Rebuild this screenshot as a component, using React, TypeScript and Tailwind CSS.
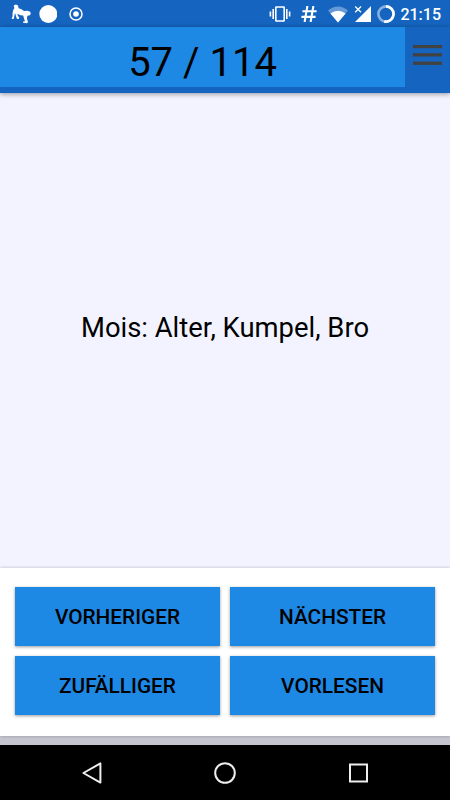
import React from 'react';

const actions = ['Vorheriger', 'Nächster', 'Zufälliger', 'Vorlesen'];

const StatusBar = () => (
  <div className="flex h-[27px] shrink-0 items-center justify-between bg-[#1565c0] text-white">
    <div className="flex h-full items-center pl-[10px]">
      <svg width="24" height="27" viewBox="0 0 24 27" fill="currentColor">
        <path d="M4 5.2 6 4.5 8 5.6 8.6 8.2 11.5 9.2 14 11 17.5 10.8 20.2 11.8 20.8 13.4 20 15.2 17.4 15.8 16.9 18.5 18 22 17 23.3 13 22.8 13.2 21.6 15 21.2 14 18.4 13.2 15.6 10.5 15.2 7.8 14 7.4 14.8 9.2 17.8 8.8 19 6.8 18.8 5.8 15.4 5 13 4.2 16.4 3.9 18.8 2 19 1.7 18 2.5 16.8 2.6 12.8 3.4 9.4 4.6 8 3.8 6.8Z" />
      </svg>
      <svg className="ml-[5px]" width="18" height="18" viewBox="0 0 18 18" fill="currentColor">
        <circle cx="9.3" cy="9" r="9" />
      </svg>
      <svg className="ml-[12px]" width="14" height="14" viewBox="0 0 14 14" fill="none" stroke="currentColor">
        <circle cx="7" cy="7" r="6" strokeWidth="1.5" />
        <circle cx="7" cy="7" r="2.8" fill="currentColor" stroke="none" />
      </svg>
    </div>

    <div className="flex h-full items-center pr-[9px]">
      <svg width="22" height="16" viewBox="0 0 22 16" fill="none" stroke="currentColor" strokeWidth="1.6">
        <rect x="6.8" y="1" width="8.4" height="14" rx="0.6" />
        <path d="M4.2 3v10M1.4 5.5v5M17.8 3v10M20.6 5.5v5" />
      </svg>
      <svg className="ml-[10px]" width="16" height="16" viewBox="0 0 16 16" fill="none" stroke="currentColor" strokeWidth="2.1">
        <path d="M6.4 0 3.6 16M12.4 0 9.6 16M1.4 5.2H15.6M0.4 10.9H14.6" />
      </svg>
      <svg className="ml-[10px]" width="22" height="18" viewBox="0 0 22 18" fill="currentColor">
        <path d="M1 5.5Q11-2.5 21 5.5L11 17.5Z" opacity="0.35" />
        <path d="M3.4 8.4Q11 3 18.6 8.4L11 17.5Z" />
      </svg>
      <svg className="ml-[5px]" width="17" height="17" viewBox="0 0 17 17" fill="currentColor">
        <path d="M17 1V17H1Z" />
        <path d="M0 0H8.5L7.5 9 0 8Z" fill="#1565c0" />
        <path d="M1.2 1.5 7 7.3M7 1.5 1.2 7.3" stroke="currentColor" strokeWidth="1.3" />
      </svg>
      <svg className="ml-[6px]" width="18" height="18" viewBox="0 0 18 18" fill="none" stroke="currentColor" strokeWidth="2.6">
        <circle cx="9" cy="9" r="7.6" opacity="0.5" />
        <path d="M9 1.4A7.6 7.6 0 1 1 7.2 16.4" />
      </svg>
      <span className="ml-[5px] pt-px text-[16px] leading-[27px] font-medium">21:15</span>
    </div>
  </div>
);

const Header = () => (
  <header className="relative z-10 flex h-[66px] shrink-0 bg-[#1565c0] shadow-[0_1px_5px_rgba(0,0,0,0.4)]">
    <div className="flex h-[60px] w-[405px] items-center justify-center bg-[#1e88e5] pt-[11px] text-[40px] leading-none">
      57 / 114
    </div>
    <svg className="mt-[17px] ml-[8px]" width="29" height="22" viewBox="0 0 29 22" fill="#424242">
      <rect y="1" width="29" height="3.2" />
      <rect y="9.2" width="29" height="3.3" />
      <rect y="17.6" width="29" height="3.3" />
    </svg>
  </header>
);

const NavBar = () => (
  <nav className="flex h-[55px] shrink-0 items-center justify-between bg-black px-[80px] text-[#eeeeee]">
    <svg width="24" height="24" viewBox="0 0 24 24" fill="none" stroke="currentColor" strokeWidth="2" strokeLinejoin="round">
      <path d="M20.4 2.4V21.6L3.4 12Z" />
    </svg>
    <svg width="24" height="24" viewBox="0 0 24 24" fill="none" stroke="currentColor" strokeWidth="2">
      <circle cx="12" cy="12" r="9.8" />
    </svg>
    <svg width="24" height="24" viewBox="0 0 24 24" fill="none" stroke="currentColor" strokeWidth="2">
      <rect x="4" y="3.5" width="17" height="17" />
    </svg>
  </nav>
);

const App = () => {
  return (
    <div className="flex h-[800px] w-[450px] flex-col overflow-hidden bg-[#f3f3ff] font-['Roboto',sans-serif] text-black">
      <StatusBar />
      <Header />

      <main className="flex flex-1 items-center justify-center pb-[3px] text-[27.4px]">
        Mois: Alter, Kumpel, Bro
      </main>

      <div className="shrink-0 bg-[#c5c5d0] pb-[9px]">
        <div className="grid h-[168px] grid-cols-2 gap-x-[10px] gap-y-[10px] bg-white px-[15px] pt-[19px] pb-[21px] shadow-[0_0_3px_rgba(0,0,0,0.25)]">
          {actions.map((label) => (
            <button
              key={label}
              className="bg-[#1e88e5] pt-[3px] text-[20.8px] font-medium uppercase shadow-[0_1px_3px_rgba(0,0,0,0.4)]"
            >
              {label}
            </button>
          ))}
        </div>
      </div>

      <NavBar />
    </div>
  );
};

export default App;
